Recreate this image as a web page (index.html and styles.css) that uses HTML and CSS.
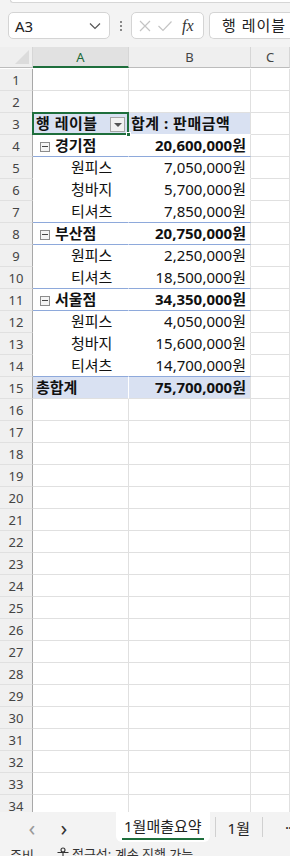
FILE: index.html
```html
<!DOCTYPE html>
<html lang="ko">
<head>
    <meta charset="UTF-8">
    <title>1월매출요약</title>
    <link rel="stylesheet" href="styles.css">
</head>
<body>
    <div class="topbar"><div class="ribbon-edge"></div></div>

    <div class="formula-bar">
        <div class="name-box">
            <span>A3</span>
            <svg width="12" height="8" viewBox="0 0 12 8"><path d="M1 1.5 L6 6.5 L11 1.5" fill="none" stroke="#555" stroke-width="1.2"/></svg>
        </div>
        <div class="dots"><i></i><i></i><i></i></div>
        <div class="fx-box">
            <svg width="14" height="14" viewBox="0 0 14 14"><path d="M2 2 L12 12 M12 2 L2 12" stroke="#c4c4c4" stroke-width="1.2"/></svg>
            <svg width="16" height="14" viewBox="0 0 16 14"><path d="M1.5 7 L6 11.5 L14.5 2.5" fill="none" stroke="#c4c4c4" stroke-width="1.2"/></svg>
            <span class="fx">fx</span>
        </div>
        <div class="formula-input">행 레이블</div>
    </div>

    <div class="sheet">
        <div class="grid" id="grid">
            <div class="corner"><span class="tri"></span></div>
            <div class="col-head active">A</div>
            <div class="col-head">B</div>
            <div class="col-head">C</div>
        </div>
    </div>

    <div class="tabs">
        <span class="nav">&lsaquo;</span>
        <span class="nav">&rsaquo;</span>
        <div class="tab current"><span>1월매출요약</span></div>
        <span class="sep"></span>
        <div class="tab">1월</div>
        <span class="sep"></span>
        <span class="more">&middot;&middot;&middot;</span>
    </div>

    <div class="status">
        <span>준비</span>
        <span class="access">
            <svg width="14" height="14" viewBox="0 0 14 14"><circle cx="7" cy="3" r="2" fill="none" stroke="#333" stroke-width="1.1"/><path d="M1.5 5.5 L12.5 5.5 M7 5.5 L7 9 L4.5 13.5 M7 9 L9.5 13.5" fill="none" stroke="#333" stroke-width="1.1"/></svg>
            접근성: 계속 진행 가능
        </span>
    </div>

    <script>
        (function(d){
            var grid = d.getElementById('grid')
            // row number -> [A, B, kind]
            var data = {
                3:  ['행 레이블', '합계 : 판매금액', 'head'],
                4:  ['경기점', '20,600,000원', 'group'],
                5:  ['원피스', '7,050,000원', 'item'],
                6:  ['청바지', '5,700,000원', 'item'],
                7:  ['티셔츠', '7,850,000원', 'item last'],
                8:  ['부산점', '20,750,000원', 'group'],
                9:  ['원피스', '2,250,000원', 'item'],
                10: ['티셔츠', '18,500,000원', 'item last'],
                11: ['서울점', '34,350,000원', 'group'],
                12: ['원피스', '4,050,000원', 'item'],
                13: ['청바지', '15,600,000원', 'item'],
                14: ['티셔츠', '14,700,000원', 'item last'],
                15: ['총합계', '75,700,000원', 'total']
            }
            var html = ''
            for (var r = 1; r <= 35; r++) {
                var row = data[r]
                var kind = row ? row[2] : ''
                html += '<div class="row-head">' + r + '</div>'
                if (!row) {
                    html += '<div class="cell"></div><div class="cell"></div><div class="cell"></div>'
                    continue
                }
                var a = row[0]
                if (kind == 'group') a = '<span class="minus"></span>' + a
                if (kind == 'head') a = a + '<span class="drop"></span>'
                html += '<div class="cell pv a ' + kind + (r == 3 ? ' selected' : '') + '">' + a + '</div>'
                html += '<div class="cell pv b ' + kind + '">' + row[1] + '</div>'
                html += '<div class="cell"></div>'
            }
            grid.insertAdjacentHTML('beforeend', html)
        })(document)
    </script>
</body>
</html>
```

FILE: styles.css
```css
html{
    box-sizing: border-box;
}
*,*::before,*::after{
    box-sizing: inherit;
    margin: 0;
    padding: 0;
}
body{
    width: 290px;
    height: 856px;
    overflow: hidden;
    background-color: #f3f3f3;
    font-family: "Noto Sans", "Noto Sans CJK KR", sans-serif;
    color: #222;
}

/* top ribbon */
.topbar{
    height: 12px;
    padding-left: 10px;
}
.ribbon-edge{
    height: 3px;
    background: #fff;
    border: 1px solid #d6d6d6;
    border-top: none;
    border-right: none;
    border-radius: 0 0 0 6px;
}

/* formula bar */
.formula-bar{
    display: flex;
    align-items: center;
    height: 27px;
    padding-left: 8px;
}
.name-box{
    width: 102px;
    height: 27px;
    background: #fff;
    border: 1px solid #d4d4d4;
    border-radius: 5px;
    display: flex;
    align-items: center;
    justify-content: space-between;
    padding: 0 8px 0 6px;
    font-size: 15px;
    color: #222;
}
.dots{
    width: 21px;
    display: flex;
    flex-direction: column;
    align-items: center;
    gap: 2px;
}
.dots i{
    display: block;
    width: 2px;
    height: 2px;
    background: #888;
}
.fx-box{
    width: 73px;
    height: 27px;
    background: #fff;
    border: 1px solid #d4d4d4;
    border-radius: 5px;
    display: flex;
    align-items: center;
    padding-left: 6px;
    gap: 5px;
}
.fx{
    font-family: "Liberation Serif", serif;
    font-style: italic;
    font-size: 16px;
    color: #333;
    margin-left: 4px;
}
.formula-input{
    flex: 1;
    height: 27px;
    margin-left: 5px;
    background: #fff;
    border: 1px solid #d4d4d4;
    border-right: none;
    border-radius: 5px 0 0 5px;
    padding-left: 12px;
    font-size: 15px;
    line-height: 25px;
    letter-spacing: 1px;
    white-space: nowrap;
}

/* sheet */
.sheet{
    margin-top: 8px;
    height: 765px;
    overflow: hidden;
    background: #fff;
}
.grid{
    display: grid;
    grid-template-columns: 33px 96px 122px 1fr;
    grid-auto-rows: 22px;
}
.corner, .col-head{
    height: 21px;
    background: #efefef;
    border-bottom: 1px solid #bcbcbc;
    border-right: 1px solid #d6d6d6;
}
.corner{
    position: relative;
}
.tri{
    position: absolute;
    right: 3px;
    bottom: 3px;
    border-left: 14px solid transparent;
    border-bottom: 14px solid #dcdcdc;
}
.col-head{
    font-size: 13px;
    color: #444;
    text-align: center;
    line-height: 20px;
}
.col-head.active{
    background: #e1e1e1;
    color: #1d6a3a;
    border-bottom: 2px solid #1e6e3c;
}
.row-head{
    background: #f0f0f0;
    border-right: 1px solid #a8a8a8;
    border-bottom: 1px solid #e0e0e0;
    font-size: 13px;
    color: #444;
    text-align: center;
    line-height: 22px;
}
.cell{
    border-right: 1px solid #e0e0e0;
    border-bottom: 1px solid #e0e0e0;
    font-size: 15px;
    line-height: 21px;
    white-space: nowrap;
    color: #111;
}
.pv{
    border-right-color: #fff;
    border-bottom-color: #fff;
}
.pv.b{
    text-align: right;
    padding-right: 4px;
    border-right-color: #e0e0e0;
}
.pv.a{
    padding-left: 3px;
}
.pv.item.a{
    padding-left: 38px;
}
.pv.head, .pv.total{
    background: #d9e1f2;
    font-weight: bold;
}
.pv.head{
    letter-spacing: 0.5px;
}
.pv.head.b{
    text-align: left;
    padding-left: 2px;
}
.pv.group{
    font-weight: bold;
    border-bottom-color: #8ea9db;
}
.pv.last{
    border-bottom-color: #8ea9db;
}
.pv.total{
    border-bottom-color: #e0e0e0;
}
.minus{
    display: inline-block;
    width: 10px;
    height: 10px;
    border: 1px solid #8c8c8c;
    background: #f4f4f4;
    margin: 0 5px 0 4px;
    vertical-align: -1px;
    position: relative;
}
.minus::after{
    content: "";
    position: absolute;
    left: 1px;
    right: 1px;
    top: 3px;
    height: 1px;
    background: #444;
}
.selected{
    position: relative;
}
.selected::before{
    content: "";
    position: absolute;
    left: -1px;
    top: -1px;
    right: -1px;
    bottom: -1px;
    border: 2px solid #1e6e3c;
}
.selected::after{
    content: "";
    position: absolute;
    right: -3px;
    bottom: -3px;
    width: 5px;
    height: 5px;
    background: #1e6e3c;
    border: 1px solid #fff;
}
.drop{
    position: absolute;
    right: 3px;
    top: 4px;
    width: 15px;
    height: 15px;
    background: #f2f2f2;
    border: 1px solid #a6a6a6;
}
.drop::after{
    content: "";
    position: absolute;
    left: 3px;
    top: 5px;
    border-left: 4px solid transparent;
    border-right: 4px solid transparent;
    border-top: 4px solid #555;
}

/* sheet tabs */
.tabs{
    height: 30px;
    display: flex;
    align-items: center;
    font-size: 15px;
    white-space: nowrap;
    overflow: hidden;
}
.tabs > *{
    flex-shrink: 0;
}
.nav{
    width: 32px;
    text-align: center;
    font-size: 22px;
    color: #999;
    line-height: 26px;
}
.nav:first-child{
    margin-left: 16px;
}
.nav:nth-child(2){
    color: #333;
}
.tab{
    padding: 0 12px;
    color: #222;
}
.tab.current{
    margin-left: 36px;
    margin-right: 5px;
    align-self: stretch;
    background: #fff;
    border-radius: 0 0 6px 6px;
    padding: 3px 6px 0;
}
.tab.current span{
    display: block;
    padding: 0 2px 2px;
    border-bottom: 2px solid #1e6e3c;
}
.sep{
    width: 1px;
    height: 20px;
    background: #d0d0d0;
}
.more{
    margin-left: 22px;
    font-size: 15px;
    letter-spacing: -1px;
}

/* status */
.status{
    height: 20px;
    padding: 3px 0 0 10px;
    display: flex;
    gap: 22px;
    font-size: 13px;
    color: #333;
    white-space: nowrap;
}
.access{
    display: flex;
    align-items: center;
    gap: 2px;
}
```
